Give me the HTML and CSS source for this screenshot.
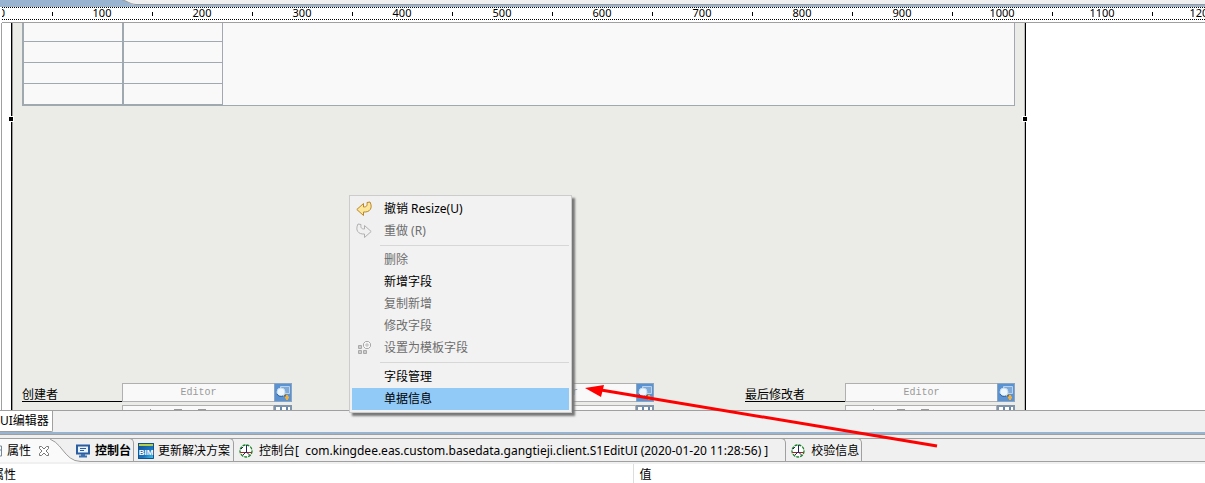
FILE: index.html
```html
<!DOCTYPE html>
<html lang="zh-CN">
<head>
<meta charset="utf-8">
<title>UI编辑器</title>
<link rel="stylesheet" href="styles.css">
</head>
<body>
<svg class="defs" width="0" height="0" aria-hidden="true">
  <symbol id="lookup" viewBox="0 0 16 17">
    <path fill="#5b93d2" d="M0 0h16v17H0z"/>
    <path d="M5.500 2.500h9v7h-9z" fill="#7fa9d8" stroke="#b9d2ec"/>
    <path d="M9 11l4 3" stroke="#8a6a30" stroke-width="2"/>
    <path d="M12 11v5M10 13.500h4" stroke="#f0b040" stroke-width="2"/>
    <circle cx="6" cy="8" r="4" fill="#eef6fd" stroke="#c4dcf2"/>
    <path d="M2 10a4.500 4.500 0 0 0 6 2" stroke="#2c5d97" fill="none"/>
  </symbol>
  <symbol id="globe" viewBox="0 0 14 14">
    <circle cx="7" cy="7" r="6" fill="#fff" stroke="#158322" stroke-dasharray="3 1" stroke-width="1.300"/>
    <path d="M1.500 8.500h11" stroke="#a22" fill="none"/>
    <path d="M7.500 1v7l3 3M7 8l-3 3M4 3L2 5" stroke="#226" fill="none"/>
  </symbol>
</svg>
<header class="topstrip">
  <svg class="topcurve" viewBox="0 0 14 5" aria-hidden="true"><path d="M0 0h14v5C7 5 7 1 0 0z" fill="#f0f0f0"/><path d="M0 0C6 1 7 4 14 4.500" fill="none" stroke="#999"/></svg>
  <div class="topfill"></div>
</header>
<div class="ruler">
  <span>0</span><span>100</span><span>200</span><span>300</span><span>400</span><span>500</span><span>600</span><span>700</span><span>800</span><span>900</span><span>1000</span><span>1100</span><span>1200</span>
</div>
<main class="canvas">
  <form class="form">
    <div class="sheet">
      <table class="grid">
        <tr><td></td><td></td></tr>
        <tr><td></td><td></td></tr>
        <tr><td></td><td></td></tr>
        <tr><td></td><td></td></tr>
      </table>
    </div>
    <div class="fields">
      <div class="field"><label for="creator">创建者</label><input id="creator" value="Editor"><button type="button" aria-label="查找"><svg><use href="#lookup"/></svg></button></div>
      <div class="field"><label for="middle"></label><input id="middle" aria-label="Editor" value="Editor"><button type="button" aria-label="查找"><svg><use href="#lookup"/></svg></button></div>
      <div class="field"><label for="modifier">最后修改者</label><input id="modifier" value="Editor"><button type="button" aria-label="查找"><svg><use href="#lookup"/></svg></button></div>
    </div>
    <div class="fields">
      <div class="field date"><span class="box"><i></i><i></i><i></i></span><span class="cal"></span></div>
      <div class="field date"><span class="box"><i></i><i></i><i></i></span><span class="cal"></span></div>
      <div class="field date"><span class="box"><i></i><i></i><i></i></span><span class="cal"></span></div>
    </div>
    <b class="handle left"></b><b class="handle right"></b>
  </form>
</main>
<div class="pages"><button class="page">UI编辑器</button></div>
<nav class="tabs">
  <button class="tab current"><svg class="sheeticon" viewBox="0 0 2 12"><path d="M0 1h1.500v10H0M0 5h1" fill="none" stroke="#789"/></svg>属性<svg class="close" viewBox="0 0 12 12"><path d="M1.500 1.500h2L6 4l2.500-2.500h2v2L8 6l2.500 2.500v2h-2L6 8l-2.500 2.500h-2v-2L4 6 1.500 3.500z" fill="#fff" stroke="#777"/></svg></button>
  <svg class="swoop" viewBox="0 0 36 24" aria-hidden="true"><path d="M0 0C17 0 18 23 36 23v1H0z" fill="#fafafa"/><path d="M0 .5h36" stroke="#a0a0a0"/><path d="M0 .5C17 .5 18 23.500 36 23.500" fill="none" stroke="#999"/></svg>
  <button class="tab strong"><svg class="ic14" viewBox="0 0 14 14"><path d="M1 1.500h12v8H1z" fill="#e9f3fc" stroke="#2b5da0" stroke-width="2"/><path d="M4 4.500h6M4 6.500h4" stroke="#2b5da0"/><path d="M3 12.500h8M5 11h4" stroke="#3c70b0" stroke-width="2"/></svg>控制台</button>
  <button class="tab bim"><svg class="ic16" viewBox="0 0 16 16"><defs><linearGradient id="bg" x1="0" y1="0" x2="1" y2="1"><stop offset="0" stop-color="#174c91"/><stop offset=".6" stop-color="#1976be"/><stop offset="1" stop-color="#49d2ed"/></linearGradient></defs><path d="M0 0h16v16H0z" fill="url(#bg)"/><path d="M1 2h14" stroke="#b6cf4a" stroke-width="2"/><path d="M.5.5h15v15H.5z" fill="none" stroke="#12518c"/><text x="8" y="12" text-anchor="middle">BIM</text></svg>更新解决方案</button>
  <button class="tab long console"><svg class="ic14"><use href="#globe"/></svg><span>控制台[&nbsp; com.kingdee.eas.custom.basedata.gangtieji.client.S1EditUI (2020-01-20 11:28:56) ]</span></button>
  <button class="tab long"><svg class="ic14"><use href="#globe"/></svg>校验信息</button>
</nav>
<table class="props"><tr><th class="name">属性</th><th>值</th></tr></table>

<div class="menu" role="menu">
  <button class="item" role="menuitem"><svg viewBox="0 0 16 16"><path d="M.8 8.500L7.500 2.500v3.500c3 0 4-1 3.500-4.500l3-.5c3 6 0 10.500-6.500 10v3.500z" fill="#fbe69a" stroke="#b8862b"/></svg>撤销 Resize(U)</button>
  <button class="item" role="menuitem" disabled><svg viewBox="0 0 16 16"><path d="M15.200 8.500L8.500 2.500v3.500c-3 0-4-1-3.500-4.500L2 1c-3 6 0 10.500 6.500 10v3.500z" fill="#f0f0f0" stroke="#b0b0b0"/></svg>重做 (R)</button>
  <hr>
  <button class="item" role="menuitem" disabled>删除</button>
  <button class="item" role="menuitem">新增字段</button>
  <button class="item" role="menuitem" disabled>复制新增</button>
  <button class="item" role="menuitem" disabled>修改字段</button>
  <button class="item" role="menuitem" disabled><svg viewBox="0 0 16 16"><path d="M2.500 5.500h3v3h-3zM2.500 10.500h3v3h-3zM7.500 10.500h3v3h-3z" fill="#ccc" stroke="#a8a8a8"/><path d="M9.500 1.500h3l2 2v3l-2 2h-3l-2-2v-3z" fill="#f4f4f4" stroke="#a8a8a8"/><path d="M9 5h4M11 3v4" stroke="#bbb"/></svg>设置为模板字段</button>
  <hr>
  <button class="item" role="menuitem">字段管理</button>
  <button class="item hot" role="menuitem">单据信息</button>
</div>
<svg class="arrow" viewBox="0 0 354 64" aria-hidden="true"><path d="M16 6L352 62" stroke="#f00" stroke-width="3"/><path d="M0 4l19-3-3 12z" fill="#f00"/></svg>
</body>
</html>
```
FILE: styles.css
```css
* { box-sizing: border-box; }
body {
  margin: 0;
  height: 100vh;
  display: flex;
  flex-direction: column;
  overflow: hidden;
  position: relative;
  background: #fff;
  color: #000;
  font: 12px/16px "Noto Sans", "Noto Sans CJK SC", sans-serif;
}
button { font: inherit; color: inherit; border: 0; padding: 0; margin: 0; background: none; }
svg { display: block; flex: none; }
.defs { position: absolute; }

.topstrip { display: flex; flex: none; height: 7px; padding-left: 122px; background: #99b4d1; }
.topcurve { width: 14px; height: 5px; }
.topfill { flex: 1; height: 5px; background: #f0f0f0; border-bottom: 1px solid #999; }

.ruler {
  display: flex;
  flex: none;
  height: 16px;
  margin-left: 2px;
  overflow: hidden;
  border-bottom: 1px solid #a0a0a0;
  font-size: 11px;
  line-height: 12px;
  background:
    repeating-linear-gradient(90deg, #000 0 1px, #fff 1px 2px) 0 0 / 100% 1px no-repeat,
    repeating-linear-gradient(90deg, #000 0 1px, #fff 1px 2px) 0 12px / 100% 1px no-repeat,
    #fff;
}
.ruler span {
  flex: 0 0 100px;
  text-align: center;
  background: linear-gradient(#000, #000) 0 5px / 1px 4px no-repeat;
}
.ruler span:first-child { margin-left: -50px; }

.canvas { flex: 1; min-height: 0; display: flex; overflow: hidden; margin-left: 1px; padding-left: 9px; border-left: 1px solid #a0a0a0; }
.form {
  position: relative;
  flex: 0 1 1015px;
  min-width: 0;
  padding: 0 10px;
  background: #ebece7;
  border-left: 1px solid #000;
  border-right: 1px solid #000;
  box-shadow: inset 1px 0 #999, inset -1px 0 #bbb;
}
.sheet { height: 83px; margin-bottom: 277px; background: #f9f9f9; border: solid #a0a8b0; border-width: 0 1px 1px; }
.grid { border-collapse: separate; border-spacing: 0; }
.grid td { width: 100px; height: 21px; padding: 0; border: 1px solid #a0a8b0; border-width: 0 1px 1px; }
.grid tr:first-child td { height: 19px; }
.fields { display: flex; justify-content: space-between; margin-bottom: 3px; }
.field { display: flex; width: 270px; height: 19px; }
.field label { width: 100px; line-height: 24px; border-bottom: 1px solid #000; text-decoration: underline; text-underline-offset: 2px; }
.field input {
  width: 152px;
  min-width: 0;
  padding: 0;
  border: 1px solid #b0b0b0;
  border-right: 0;
  background: #f9f9f9;
  color: #999;
  text-align: center;
  font: 10px "Liberation Mono", monospace;
}
.field button { width: 18px; height: 19px; border: 1px solid #8ba5c0; }
.field button svg { width: 16px; height: 17px; }
.date .box { display: flex; gap: 16px; width: 152px; margin-left: 100px; padding: 3px 0 0 51px; border: 1px solid #b0b0b0; background: #f9f9f9; }
.date i { width: 8px; height: 1px; background: #999; }
.date i:first-child { width: 1px; height: 3px; margin-left: -24px; margin-right: 7px; }
.date .cal { width: 18px; border: 2px solid #7f94aa; background: repeating-linear-gradient(90deg, #fff 0 4px, #6688aa 4px 6px); }
.handle { position: absolute; top: 93px; width: 6px; height: 6px; background: #000; border: 1px solid #fff; }
.handle.left { left: -4px; }
.handle.right { right: -3px; }

.pages { flex: none; height: 22px; background: #f0f0f0; border-top: 1px solid #a0a0a0; }
.page { height: 21px; padding: 0 3px 0 0; background: #fff; border: solid #a0a0a0; border-width: 0 1px 1px 0; border-radius: 0 0 2px 0; white-space: nowrap; }

.tabs {
  display: flex;
  flex: none;
  height: 32px;
  padding-top: 6px;
  padding-bottom: 2px;
  background:
    linear-gradient(#99b4d1 0 2px, #a0a0a0 2px 3px, #f0f0f0 3px 6px, #a0a0a0 6px 7px, #f0f0f0 7px 29px, #a0a0a0 29px 30px, #f0f0f0 30px);
  white-space: nowrap;
}
.tab { display: flex; flex: none; align-items: center; height: 23px; gap: 5px; padding: 1px 2px 0 5px; border-right: 1px solid #a0a0a0; border-top: 1px solid #a0a0a0; border-top-right-radius: 5px; }
.tab.current { position: relative; z-index: 1; padding: 0; gap: 0; border-right: 0; border-radius: 0; background: #fafafa; height: 24px; margin-right: -5px; }
.sheeticon { width: 2px; height: 12px; margin-right: 5px; }
.close { width: 12px; height: 12px; margin-left: 7px; }
.swoop { width: 36px; height: 24px; }
.tab.strong { margin-left: -10px; font-weight: bold; }
.tab.bim { gap: 4px; padding-left: 4px; padding-right: 3px; }
.tab.long { gap: 6px; }
.tab.console { padding-right: 17px; }
.ic14 { width: 14px; height: 14px; }
.ic16 { width: 16px; height: 16px; }
.ic16 text { font: bold 8px "Liberation Sans", sans-serif; fill: #fff; }

.props { flex: none; width: 100%; height: 19px; border-collapse: collapse; table-layout: fixed; }
.props th { padding: 2px 0 0 6px; font-weight: normal; text-align: left; line-height: 17px; }
.props .name { width: 633px; padding-left: 0; text-indent: -8px; border-right: 1px solid #ddd; }

.menu {
  position: absolute;
  left: 349px;
  top: 195px;
  width: 223px;
  padding: 2px;
  background: linear-gradient(90deg, #f0f0f0 30px, #f2f2f2 30px);
  border: 1px solid #ccc;
  box-shadow: 3px 3px 2px #777;
}
.menu hr { height: 1px; margin: 3px 0 3px 28px; border: 0; background: #d7d7d7; }
.item { display: flex; align-items: center; gap: 12px; width: 100%; height: 22px; padding-left: 32px; }
.item svg { width: 16px; height: 16px; margin-left: -28px; }
.item:disabled { color: #6d6d6d; }
.item.hot { background: #91c9f7; }
.arrow { position: absolute; left: 585px; top: 384px; width: 354px; height: 64px; }
```
